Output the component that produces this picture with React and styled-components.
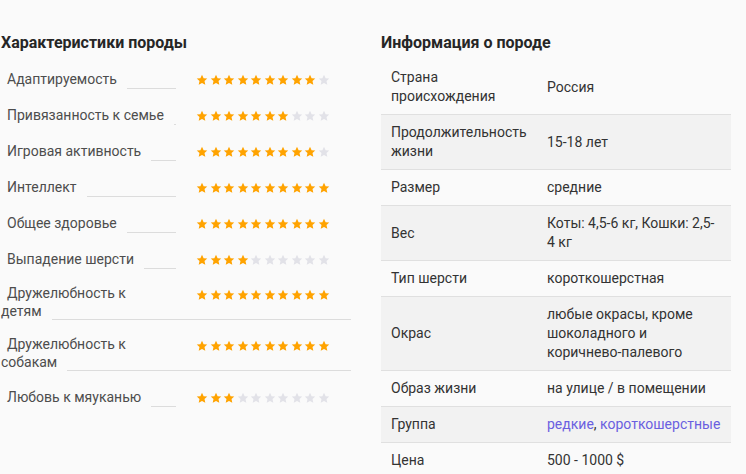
import React from "react";
import styled, { createGlobalStyle } from "styled-components";

const GlobalStyle = createGlobalStyle`
  html, body {
    margin: 0;
    padding: 0;
    background: #fafafa;
  }
  body {
    font-family: Roboto, "Noto Sans", "Liberation Sans", sans-serif;
    font-size: 14px;
    color: #333;
  }
`;

const Page = styled.div`
  display: flex;
  align-items: flex-start;
  gap: 30px;
  padding: 33px 0 0 1px;
`;

const Column = styled.section`
  width: 350px;
  display: flex;
  flex-direction: column;
`;

const Title = styled.h2`
  margin: 0;
  font-size: 16px;
  line-height: 20px;
  font-weight: 700;
  color: #262626;
`;

const RatingList = styled.div`
  display: flex;
  flex-direction: column;
  gap: 16px;
  margin-top: 16px;
`;

const Row = styled.div`
  display: grid;
  grid-template-columns: auto 1fr 175px;
  line-height: ${(p) => (p.$wrapped ? "17.5px" : "20px")};
  color: #4d4d4d;
  font-size: 14px;
`;

const Label = styled.span`
  padding-left: 6px;
  white-space: nowrap;
  grid-column: ${(p) => (p.$wrapped ? "1 / 3" : "1")};
`;

const Tail = styled.span`
  grid-column: 1;
  grid-row: 2;
  white-space: nowrap;
`;

const Leader = styled.span`
  align-self: end;
  height: 1px;
  margin-left: 10px;
  background: #dcdcdc;
  grid-column: ${(p) => (p.$wrapped ? "2 / 4" : "2")};
  grid-row: ${(p) => (p.$wrapped ? "2" : "1")};
`;

const Stars = styled.span`
  grid-column: 3;
  grid-row: 1;
  display: flex;
  align-items: center;
  gap: 1.5px;
  padding-left: 20px;
  margin-top: ${(p) => (p.$wrapped ? "3px" : "1px")};
`;

const StarIcon = styled.svg`
  width: 12px;
  height: 12px;
  flex: none;
  fill: ${(p) => (p.$on ? "#ffa300" : "#e2e2e8")};
`;

const Star = ({ on }) => (
  <StarIcon $on={on} viewBox="0 0 24 24">
    <path d="M12 1.5l3.2 6.9 7.3.8-5.5 5 1.6 7.4L12 17.8l-6.6 3.8 1.6-7.4-5.5-5 7.3-.8z" />
  </StarIcon>
);

const Rating = ({ value }) => {
  return Array.from({ length: 10 }, (_, i) => <Star key={i} on={i < value} />);
};

const ratings = [
  { label: "Адаптируемость", value: 9 },
  { label: "Привязанность к семье", value: 7 },
  { label: "Игровая активность", value: 9 },
  { label: "Интеллект", value: 10 },
  { label: "Общее здоровье", value: 10 },
  { label: "Выпадение шерсти", value: 4 },
  { label: "Дружелюбность к", tail: "детям", value: 10 },
  { label: "Дружелюбность к", tail: "собакам", value: 10 },
  { label: "Любовь к мяуканью", value: 3 },
];

const InfoTable = styled.table`
  width: 350px;
  margin-top: 7px;
  border-collapse: collapse;
  table-layout: fixed;
  font-size: 14px;
  line-height: 19px;
  color: #333;
`;

const InfoRow = styled.tr`
  background: ${(p) => (p.$shade ? "#f2f2f2" : "transparent")};
  & + & {
    border-top: 1px solid #e0e0e0;
  }
`;

const KeyCell = styled.td`
  width: 156px;
  box-sizing: border-box;
  padding: 8px 10px;
  vertical-align: middle;
`;

const ValueCell = styled.td`
  padding: 8px 11px 8px 10px;
  vertical-align: middle;
`;

const LinkList = styled.span`
  white-space: nowrap;
`;

const Link = styled.a`
  color: #6a5fe0;
  text-decoration: none;
`;

const info = [
  { k: "Страна происхождения", v: "Россия" },
  { k: "Продолжительность жизни", v: "15-18 лет" },
  { k: "Размер", v: "средние" },
  { k: "Вес", v: "Коты: 4,5-6 кг, Кошки: 2,5-4 кг" },
  { k: "Тип шерсти", v: "короткошерстная" },
  { k: "Окрас", v: "любые окрасы, кроме шоколадного и коричнево-палевого" },
  { k: "Образ жизни", v: "на улице / в помещении" },
  {
    k: "Группа",
    v: (
      <LinkList>
        <Link href="#">редкие</Link>, <Link href="#">короткошерстные</Link>
      </LinkList>
    ),
  },
  { k: "Цена", v: "500 - 1000 $" },
];

export default function App() {
  return (
    <>
      <GlobalStyle />
      <Page>
        <Column>
          <Title>Характеристики породы</Title>
          <RatingList>
            {ratings.map((r) => {
              const wrapped = Boolean(r.tail);
              return (
                <Row key={r.label + (r.tail || "")} $wrapped={wrapped}>
                  <Label $wrapped={wrapped}>{r.label}</Label>
                  {wrapped && <Tail>{r.tail}</Tail>}
                  <Leader $wrapped={wrapped} />
                  <Stars $wrapped={wrapped}>
                    <Rating value={r.value} />
                  </Stars>
                </Row>
              );
            })}
          </RatingList>
        </Column>
        <Column>
          <Title>Информация о породе</Title>
          <InfoTable>
            <tbody>
              {info.map((row, i) => (
                <InfoRow key={row.k} $shade={i % 2 === 1}>
                  <KeyCell>{row.k}</KeyCell>
                  <ValueCell>{row.v}</ValueCell>
                </InfoRow>
              ))}
            </tbody>
          </InfoTable>
        </Column>
      </Page>
    </>
  );
}
